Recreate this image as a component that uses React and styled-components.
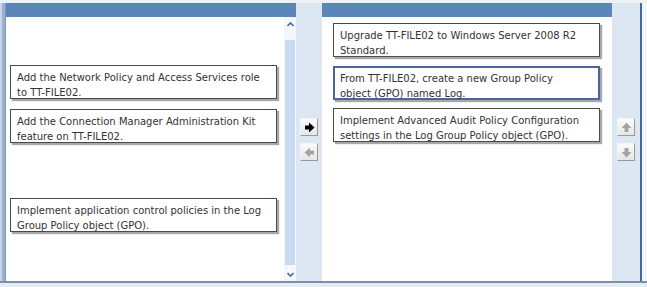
import React from 'react';
import styled, { createGlobalStyle } from 'styled-components';

const GlobalStyle = createGlobalStyle`
  html, body {
    margin: 0;
    padding: 0;
    background: #f3f5f8;
  }
`;

const Frame = styled.div`
  width: 647px;
  height: 287px;
  display: flex;
  flex-direction: column;
  background: #f1f3f6;
  overflow: hidden;
  font-family: "DejaVu Sans", Verdana, sans-serif;
`;

const TopStrip = styled.div`
  height: 3px;
  background: #eef1f5;
`;

const MainRow = styled.div`
  height: 278px;
  display: flex;
`;

const LeftEdge = styled.div`
  width: 6px;
  background: linear-gradient(to right, #c9d6e8 0 2px, #98b1d2 2px 5px, #7d98bd 5px 6px);
`;

const Pane = styled.div`
  width: 290px;
  display: flex;
  flex-direction: column;
`;

const PaneHeader = styled.div`
  height: 14px;
  background: #5b87b8;
`;

const PaneBody = styled.div`
  flex: 1;
  display: flex;
  background: #fff;
`;

const List = styled.div`
  flex: 1;
  display: flex;
  flex-direction: column;
  gap: ${p => p.$gap}px;
  padding: ${p => p.$top}px ${p => p.$right}px 0 ${p => p.$left}px;
`;

const Card = styled.div`
  height: 34px;
  box-sizing: border-box;
  padding: ${p => (p.$selected ? '3px 5px 0' : '4px 6px 0')};
  border: ${p => (p.$selected ? '2px solid #48679f' : '1px solid #4a4a4a')};
  background: #fff;
  box-shadow: 2px 2px 1px #a8a8a8;
  color: #333;
  font-size: 10px;
  line-height: 15px;
  visibility: ${p => (p.$empty ? 'hidden' : 'visible')};
`;

const Line = styled.span`
  display: block;
  white-space: nowrap;
`;

const Scrollbar = styled.div`
  width: 12px;
  display: flex;
  flex-direction: column;
  background: #f4f7fc;
`;

const ScrollCap = styled.div`
  height: ${p => p.$h}px;
  display: flex;
  align-items: ${p => (p.$bottom ? 'flex-end' : 'flex-start')};
  justify-content: center;
  padding: ${p => (p.$bottom ? '0 0 4px' : '5px 0 0')};
  box-sizing: border-box;
  color: #4d6a9c;
`;

const ScrollTrack = styled.div`
  flex: 1;
  margin: 0 1px;
  background: #c8daf2;
`;

const SideColumn = styled.div`
  width: ${p => p.$w}px;
  display: flex;
  flex-direction: column;
  align-items: center;
  gap: 7px;
  padding-top: 115px;
  box-sizing: border-box;
  background: #dde7f4;
`;

const ArrowButton = styled.div`
  width: 18px;
  height: 18px;
  box-sizing: border-box;
  display: flex;
  align-items: center;
  justify-content: center;
  background: linear-gradient(#fbfbfb, #e6e6e6);
  border: 1px solid #f4f4f4;
  border-right-color: #9a9a9a;
  border-bottom-color: #9a9a9a;
  color: ${p => (p.$active ? '#000' : '#a4a4a4')};
`;

const RightEdge = styled.div`
  width: 7px;
  background: linear-gradient(to right, #3f6aa0 0 2px, #f2f4f7 2px);
`;

const BottomLine = styled.div`
  height: 2px;
  background: #7890ae;
`;

const BottomStrip = styled.div`
  flex: 1;
  background: #e6ebf2;
`;

const Chevron = ({ up }) => (
  <svg width="7" height="5" viewBox="0 0 7 5">
    <path d={up ? 'M0.5 4 L3.5 1 L6.5 4' : 'M0.5 1 L3.5 4 L6.5 1'} fill="none" stroke="currentColor" strokeWidth="1.6" />
  </svg>
);

const BlockArrow = ({ dir }) => {
  const rot = { right: 0, left: 180, up: -90, down: 90 }[dir];
  return (
    <svg width="11" height="11" viewBox="0 0 11 11">
      <path d="M1 3.5 H5 V0.5 L10.5 5.5 L5 10.5 V7.5 H1 Z" fill="currentColor" transform={`rotate(${rot} 5.5 5.5)`} />
    </svg>
  );
};

const leftItems = [
  null,
  ['Add the Network Policy and Access Services role', 'to TT-FILE02.'],
  ['Add the Connection Manager Administration Kit', 'feature on TT-FILE02.'],
  null,
  ['Implement application control policies in the Log', 'Group Policy object (GPO).'],
];

const rightItems = [
  { lines: ['Upgrade TT-FILE02 to Windows Server 2008 R2', 'Standard.'] },
  { lines: ['From TT-FILE02, create a new Group Policy', 'object (GPO) named Log.'], selected: true },
  { lines: ['Implement Advanced Audit Policy Configuration', 'settings in the Log Group Policy object (GPO).'] },
];

const App = () => (
  <>
    <GlobalStyle />
    <Frame>
      <TopStrip />
      <MainRow>
        <LeftEdge />
        <Pane>
          <PaneHeader />
          <PaneBody>
            <List $gap={10.5} $top={3} $left={4} $right={7}>
              {leftItems.map((lines, i) => (
                <Card key={i} $empty={!lines}>
                  {lines && lines.map(l => <Line key={l}>{l}</Line>)}
                </Card>
              ))}
            </List>
            <Scrollbar>
              <ScrollCap $h={23}><Chevron up /></ScrollCap>
              <ScrollTrack />
              <ScrollCap $h={16} $bottom><Chevron /></ScrollCap>
            </Scrollbar>
          </PaneBody>
        </Pane>
        <SideColumn $w={26}>
          <ArrowButton $active><BlockArrow dir="right" /></ArrowButton>
          <ArrowButton><BlockArrow dir="left" /></ArrowButton>
        </SideColumn>
        <Pane>
          <PaneHeader />
          <PaneBody>
            <List $gap={8.5} $top={6} $left={11} $right={12}>
              {rightItems.map((it, i) => (
                <Card key={i} $selected={it.selected}>
                  {it.lines.map(l => <Line key={l}>{l}</Line>)}
                </Card>
              ))}
            </List>
          </PaneBody>
        </Pane>
        <SideColumn $w={28}>
          <ArrowButton><BlockArrow dir="up" /></ArrowButton>
          <ArrowButton><BlockArrow dir="down" /></ArrowButton>
        </SideColumn>
        <RightEdge />
      </MainRow>
      <BottomLine />
      <BottomStrip />
    </Frame>
  </>
);

export default App;
